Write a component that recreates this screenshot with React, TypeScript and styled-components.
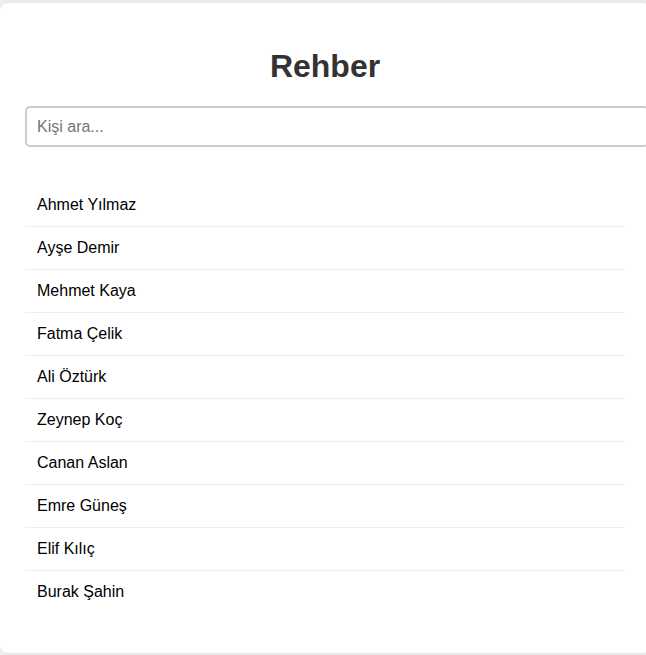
import React, { useState } from "react";
import styled, { createGlobalStyle } from "styled-components";

const GlobalStyle = createGlobalStyle`
  html, body {
    margin: 0;
    padding: 0;
    background: #f0f0f0;
    font-family: "Liberation Sans", Arial, sans-serif;
    overflow: hidden;
  }
`;

const Page = styled.div`
  padding-top: 3px;
  width: 646px;
  height: 655px;
  overflow: hidden;
`;

const Card = styled.div`
  box-sizing: content-box;
  width: 600px;
  padding: 25px;
  background: #ffffff;
  border-radius: 8px;
  box-shadow: 0 0 6px rgba(0, 0, 0, 0.08);
`;

const Title = styled.h1`
  margin: 20px 0 21px;
  font-size: 32px;
  font-weight: bold;
  color: #333333;
  text-align: center;
`;

const SearchInput = styled.input`
  display: block;
  box-sizing: content-box;
  width: 600px;
  margin: 0;
  padding: 10px;
  border: 2px solid #cccccc;
  border-radius: 5px;
  font-family: "Liberation Sans", Arial, sans-serif;
  font-size: 16px;
  line-height: 18px;
  height: 17px;
  color: #000;
  outline: none;
  &::placeholder {
    color: #757575;
  }
`;

const List = styled.ul`
  list-style: none;
  margin: 37px 0 15px;
  padding: 0;
`;

const Item = styled.li`
  padding: 12px;
  font-size: 16px;
  line-height: 18px;
  color: #000000;
  border-bottom: 1px solid #eeeeee;
  &:last-child {
    border-bottom: none;
  }
`;

const contacts = [
  "Ahmet Yılmaz",
  "Ayşe Demir",
  "Mehmet Kaya",
  "Fatma Çelik",
  "Ali Öztürk",
  "Zeynep Koç",
  "Canan Aslan",
  "Emre Güneş",
  "Elif Kılıç",
  "Burak Şahin",
];

export default function App() {
  const [query, setQuery] = useState("");
  const filtered = contacts.filter((c) =>
    c.toLocaleLowerCase("tr").includes(query.toLocaleLowerCase("tr"))
  );
  return (
    <>
      <GlobalStyle />
      <Page>
        <Card>
          <Title>Rehber</Title>
          <SearchInput
            type="text"
            placeholder="Kişi ara..."
            value={query}
            onChange={(e) => setQuery(e.target.value)}
          />
          <List>
            {filtered.map((name) => (
              <Item key={name}>{name}</Item>
            ))}
          </List>
        </Card>
      </Page>
    </>
  );
}
